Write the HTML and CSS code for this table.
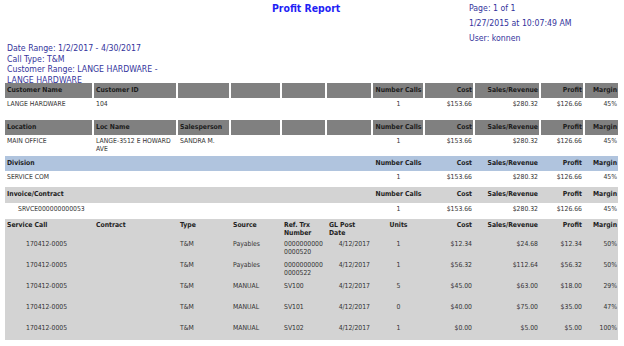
FILE: index.html
```html
<!DOCTYPE html>
<html>
<head>
<meta charset="utf-8">
<link rel="stylesheet" href="styles.css">
</head>
<body>
<div class="top">
  <div class="meta">Date Range: 1/2/2017 - 4/30/2017<br>Call Type: T&amp;M<br>Customer Range: LANGE HARDWARE -<br>LANGE HARDWARE</div>
  <div class="title">Profit Report</div>
  <div class="info">
    <div>Page: 1 of 1</div>
    <div>1/27/2015 at 10:07:49 AM</div>
    <div>User: konnen</div>
  </div>
</div>
<div class="report">
  <div class="row head">
    <div>Customer Name</div><div>Customer ID</div><div></div><div></div><div></div><div></div>
    <div class="ctr">Number Calls</div><div class="r">Cost</div><div class="r">Sales/Revenue</div><div class="r">Profit</div><div class="r">Margin</div>
  </div>
  <div class="row data tall">
    <div>LANGE HARDWARE</div><div>104</div><div></div><div></div><div></div><div></div>
    <div class="ctr">1</div><div class="r">$153.66</div><div class="r">$280.32</div><div class="r">$126.66</div><div class="r">45%</div>
  </div>
  <div class="row head">
    <div>Location</div><div>Loc Name</div><div>Salesperson</div><div></div><div></div><div></div>
    <div class="ctr">Number Calls</div><div class="r">Cost</div><div class="r">Sales/Revenue</div><div class="r">Profit</div><div class="r">Margin</div>
  </div>
  <div class="row data tall">
    <div>MAIN OFFICE</div><div>LANGE-3512 E HOWARD AVE</div><div>SANDRA M.</div><div></div><div></div><div></div>
    <div class="ctr">1</div><div class="r">$153.66</div><div class="r">$280.32</div><div class="r">$126.66</div><div class="r">45%</div>
  </div>
  <div class="row band blue">
    <div>Division</div><div></div><div></div><div></div><div></div><div></div>
    <div class="ctr">Number Calls</div><div class="r">Cost</div><div class="r">Sales/Revenue</div><div class="r">Profit</div><div class="r">Margin</div>
  </div>
  <div class="row data short">
    <div>SERVICE COM</div><div></div><div></div><div></div><div></div><div></div>
    <div class="ctr">1</div><div class="r">$153.66</div><div class="r">$280.32</div><div class="r">$126.66</div><div class="r">45%</div>
  </div>
  <div class="row band grey inv">
    <div>Invoice/Contract</div><div></div><div></div><div></div><div></div><div></div>
    <div class="ctr">Number Calls</div><div class="r">Cost</div><div class="r">Sales/Revenue</div><div class="r">Profit</div><div class="r">Margin</div>
  </div>
  <div class="row data short">
    <div class="ind1">SRVCE000000000053</div><div></div><div></div><div></div><div></div><div></div>
    <div class="ctr">1</div><div class="r">$153.66</div><div class="r">$280.32</div><div class="r">$126.66</div><div class="r">45%</div>
  </div>
  <div class="calls">
    <div class="row band callhead">
      <div>Service Call</div><div>Contract</div><div>Type</div><div>Source</div><div>Ref. Trx<br>Number</div><div>GL Post<br>Date</div>
      <div class="ctr">Units</div><div class="r">Cost</div><div class="r">Sales/Revenue</div><div class="r">Profit</div><div class="r">Margin</div>
    </div>
    <div class="row call">
      <div class="ind2">170412-0005</div><div></div><div>T&amp;M</div><div>Payables</div><div>0000000000<wbr>0000520</div><div class="r">4/12/2017</div>
      <div class="ctr">1</div><div class="r">$12.34</div><div class="r">$24.68</div><div class="r">$12.34</div><div class="r">50%</div>
    </div>
    <div class="row call">
      <div class="ind2">170412-0005</div><div></div><div>T&amp;M</div><div>Payables</div><div>0000000000<wbr>0000522</div><div class="r">4/12/2017</div>
      <div class="ctr">1</div><div class="r">$56.32</div><div class="r">$112.64</div><div class="r">$56.32</div><div class="r">50%</div>
    </div>
    <div class="row call">
      <div class="ind2">170412-0005</div><div></div><div>T&amp;M</div><div>MANUAL</div><div>SV100</div><div class="r">4/12/2017</div>
      <div class="ctr">5</div><div class="r">$45.00</div><div class="r">$63.00</div><div class="r">$18.00</div><div class="r">29%</div>
    </div>
    <div class="row call">
      <div class="ind2">170412-0005</div><div></div><div>T&amp;M</div><div>MANUAL</div><div>SV101</div><div class="r">4/12/2017</div>
      <div class="ctr">0</div><div class="r">$40.00</div><div class="r">$75.00</div><div class="r">$35.00</div><div class="r">47%</div>
    </div>
    <div class="row call last">
      <div class="ind2">170412-0005</div><div></div><div>T&amp;M</div><div>MANUAL</div><div>SV102</div><div class="r">4/12/2017</div>
      <div class="ctr">1</div><div class="r">$0.00</div><div class="r">$5.00</div><div class="r">$5.00</div><div class="r">100%</div>
    </div>
  </div>
</div>
</body>
</html>
```
FILE: styles.css
```css
body {
  margin: 0;
  font-family: "DejaVu Sans Condensed", "DejaVu Sans", sans-serif;
  color: #333;
  background: #fff;
}
.top {
  display: flex;
  height: 83px;
}
.meta {
  width: 265px;
  padding: 43px 0 0 7px;
  font-size: 8.7px;
  line-height: 10.6px;
  color: #34349c;
}
.title {
  width: 197px;
  padding-top: 2px;
  font-size: 10.4px;
  line-height: 12px;
  font-weight: bold;
  color: #1f1ff5;
}
.info {
  padding-top: 1px;
  font-size: 8.7px;
  line-height: 15px;
  color: #34349c;
}
.report {
  width: 613px;
  margin-left: 5px;
}
.row {
  display: grid;
  grid-template-columns: 87px 82px 51px 49px 43px 44px 50px 48px 64px 42px 33px;
  column-gap: 2px;
  font-size: 6.8px;
  line-height: 8.3px;
}
.row > div {
  padding: 0 1px 0 2px;
}
.row > .r {
  text-align: right;
  padding-right: 1px;
}
.row > .ctr {
  text-align: center;
}
.head > div {
  background: #808080;
  color: #1c1c1c;
  font-weight: bold;
  padding-top: 3.35px;
  padding-bottom: 3.35px;
}
.data {
  color: #333;
}
.tall {
  height: 21.7px;
  padding-top: 2.5px;
  box-sizing: border-box;
}
.short {
  height: 15.7px;
  padding-top: 2px;
  box-sizing: border-box;
}
.band {
  font-weight: bold;
  color: #222;
  padding: 3px 0 3.7px;
}
.blue {
  background: #b0c4de;
}
.grey {
  background: #d3d3d3;
}
.inv {
  padding: 3.3px 0 4.4px;
}
.calls {
  background: #d3d3d3;
  height: 121px;
}
.callhead {
  padding: 2.5px 0 1.2px;
}
.call {
  height: 21px;
  padding-top: 1px;
  box-sizing: border-box;
  color: #333;
}
.call.last {
  height: 17px;
}
.ind1 {
  padding-left: 13px !important;
}
.ind2 {
  padding-left: 21px !important;
}
```
